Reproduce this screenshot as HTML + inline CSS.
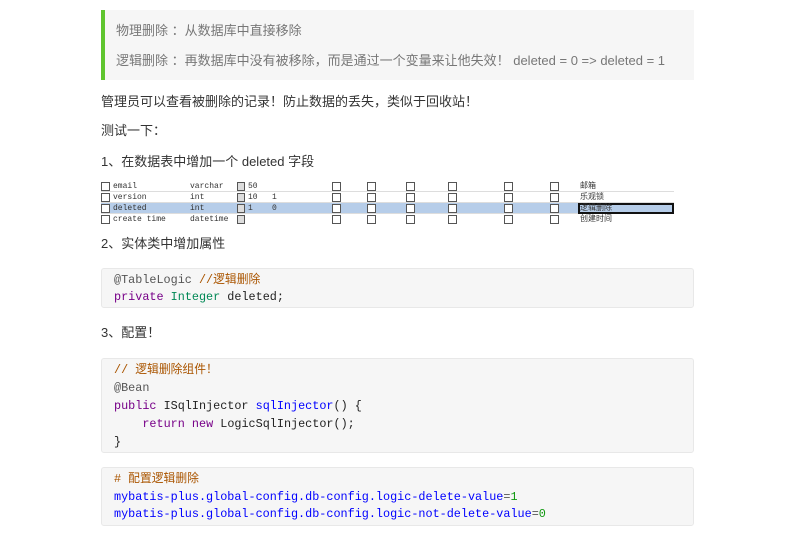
<!DOCTYPE html>
<html><head><meta charset="utf-8"><style>
*{margin:0;padding:0;box-sizing:border-box}
body{width:795px;height:539px;background:#fff;position:relative;overflow:hidden;font-family:"Liberation Sans","Noto Sans CJK SC",sans-serif;color:#333;font-size:13px}
.a{position:absolute;white-space:pre;line-height:18px}
.bq{position:absolute;left:101px;top:10px;width:593px;height:70px;background:#f6f6f6;border-left:4px solid #5fc52e}
.g{color:#777}
.code{position:absolute;left:101px;width:593px;background:#f6f6f6;border:1px solid #e8e8e8;border-radius:3px}
.m{font-family:"Liberation Mono","Noto Sans CJK SC",monospace;font-size:11.8px;color:#222}
.c{color:#aa5500}.k{color:#770088}.t{color:#008855}.d{color:#0000ff}.gr{color:#555}
.tb{position:absolute;left:101px;top:181px;width:573px;height:43px;font-family:"Liberation Mono","Noto Sans CJK SC",monospace;font-size:8px;color:#333}
.r{position:absolute;left:0;width:573px;height:11px;border-bottom:1px solid #ddd}
.r span{position:absolute;top:1px;line-height:9px}
.cb{position:absolute;top:1px;width:9px;height:9px;border:1px solid #555;background:#fff}
</style></head><body>
<div class="bq"></div>
<div class="a g" style="left:116px;top:22px">物理删除 ：从数据库中直接移除</div>
<div class="a g" style="left:116px;top:52px">逻辑删除 ：再数据库中没有被移除，而是通过一个变量来让他失效！ deleted = 0 =&gt; deleted = 1</div>
<div class="a" style="left:101px;top:93px">管理员可以查看被删除的记录！防止数据的丢失，类似于回收站！</div>
<div class="a" style="left:101px;top:122px">测试一下：</div>
<div class="a" style="left:101px;top:153px">1、在数据表中增加一个 deleted 字段</div>

<div class="tb">
 <div class="r" style="top:0"><div class="cb" style="left:0px"></div><span style="left:12px">email</span><span style="left:89px">varchar</span><div class="cb" style="left:136px;width:8px;background:#ddd"></div><span style="left:147px">50</span><span style="left:479px">邮箱</span></div>
 <div class="r" style="top:11px"><div class="cb" style="left:0px"></div><span style="left:12px">version</span><span style="left:89px">int</span><div class="cb" style="left:136px;width:8px;background:#ddd"></div><span style="left:147px">10</span><span style="left:171px">1</span><span style="left:479px">乐观锁</span></div>
 <div class="r" style="top:22px;background:#b6cde9"><div class="cb" style="left:0px"></div><span style="left:12px">deleted</span><span style="left:89px">int</span><div class="cb" style="left:136px;width:8px;background:#ddd"></div><span style="left:147px">1</span><span style="left:171px">0</span><div style="position:absolute;left:477px;top:0;width:96px;height:11px;border:2px solid #111"></div><span style="left:479px">逻辑删除</span></div>
 <div class="r" style="top:33px;border:none"><div class="cb" style="left:0px"></div><span style="left:12px">create time</span><span style="left:89px">datetime</span><div class="cb" style="left:136px;width:8px;background:#ddd"></div><span style="left:479px">创建时间</span></div>
 <div class="cb" style="left:231px;top:1px"></div><div class="cb" style="left:266px;top:1px"></div><div class="cb" style="left:305px;top:1px"></div><div class="cb" style="left:347px;top:1px"></div><div class="cb" style="left:403px;top:1px"></div><div class="cb" style="left:449px;top:1px"></div>
 <div class="cb" style="left:231px;top:12px"></div><div class="cb" style="left:266px;top:12px"></div><div class="cb" style="left:305px;top:12px"></div><div class="cb" style="left:347px;top:12px"></div><div class="cb" style="left:403px;top:12px"></div><div class="cb" style="left:449px;top:12px"></div>
 <div class="cb" style="left:231px;top:23px"></div><div class="cb" style="left:266px;top:23px"></div><div class="cb" style="left:305px;top:23px"></div><div class="cb" style="left:347px;top:23px"></div><div class="cb" style="left:403px;top:23px"></div><div class="cb" style="left:449px;top:23px"></div>
 <div class="cb" style="left:231px;top:34px"></div><div class="cb" style="left:266px;top:34px"></div><div class="cb" style="left:305px;top:34px"></div><div class="cb" style="left:347px;top:34px"></div><div class="cb" style="left:403px;top:34px"></div><div class="cb" style="left:449px;top:34px"></div>
</div>

<div class="a" style="left:101px;top:235px">2、实体类中增加属性</div>
<div class="code" style="top:268px;height:40px"></div>
<div class="a m" style="left:114px;top:271px"><span class="gr">@TableLogic</span> <span class="c">//逻辑删除</span></div>
<div class="a m" style="left:114px;top:288px"><span class="k">private</span> <span class="t">Integer</span> deleted;</div>

<div class="a" style="left:101px;top:324px">3、配置！</div>
<div class="code" style="top:358px;height:95px"></div>
<div class="a m" style="left:114px;top:361px"><span class="c">// 逻辑删除组件！</span></div>
<div class="a m" style="left:114px;top:379px"><span class="gr">@Bean</span></div>
<div class="a m" style="left:114px;top:397px"><span class="k">public</span> ISqlInjector <span class="d">sqlInjector</span>() {</div>
<div class="a m" style="left:114px;top:415px">    <span class="k">return</span> <span class="k">new</span> LogicSqlInjector();</div>
<div class="a m" style="left:114px;top:433px">}</div>

<div class="code" style="top:467px;height:59px"></div>
<div class="a m" style="left:114px;top:470px"><span class="c"># 配置逻辑删除</span></div>
<div class="a m" style="left:114px;top:488px"><span class="d">mybatis-plus.global-config.db-config.logic-delete-value</span><span class="gr">=</span><span style="color:#119911">1</span></div>
<div class="a m" style="left:114px;top:505px"><span class="d">mybatis-plus.global-config.db-config.logic-not-delete-value</span><span class="gr">=</span><span style="color:#119911">0</span></div>
</body></html>
